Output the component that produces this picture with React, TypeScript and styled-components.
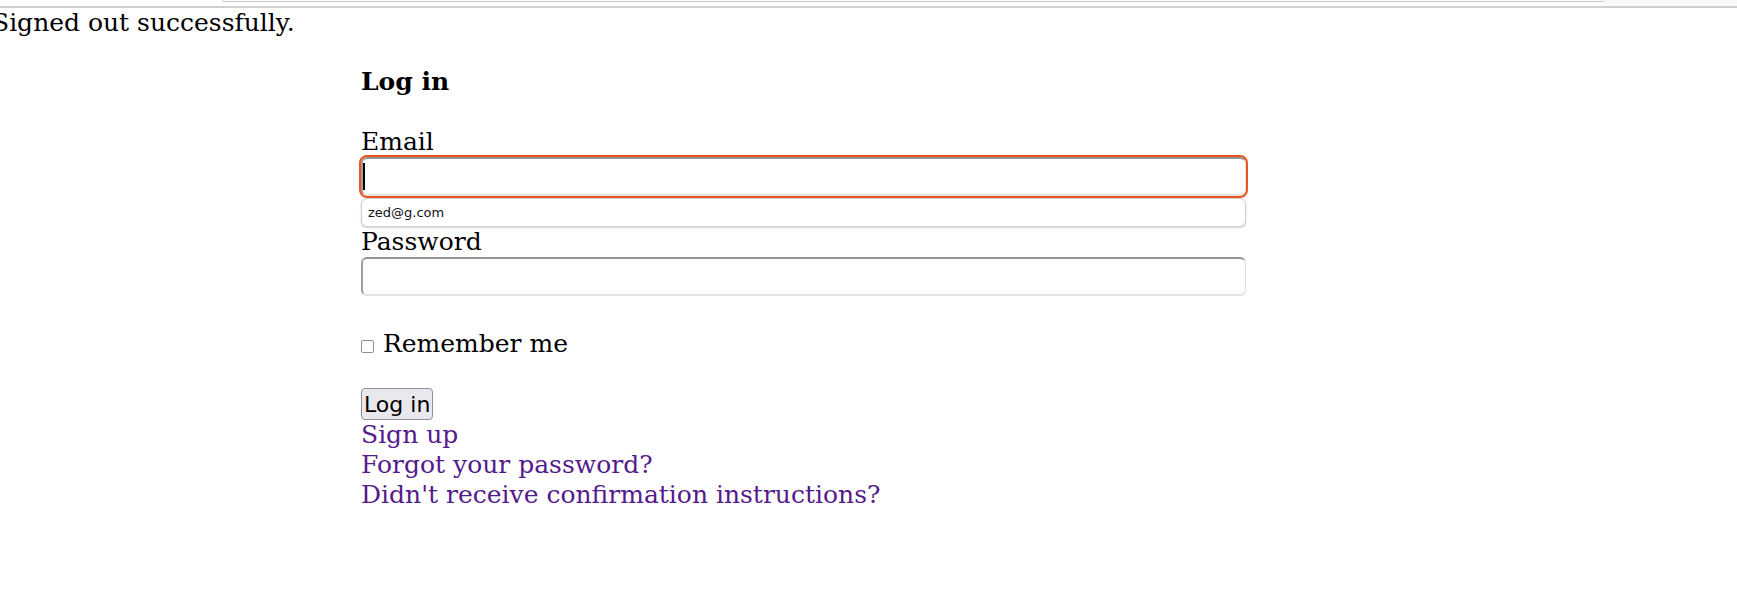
import React from "react";
import styled, { createGlobalStyle } from "styled-components";

const Global = createGlobalStyle`
  html, body { margin: 0; padding: 0; background: #ffffff; }
  body {
    font-family: "DejaVu Serif", serif;
    font-size: 25px;
    line-height: 30px;
    color: #000000;
    overflow: hidden;
  }
`;

const TopBar = styled.div`
  display: flex;
  height: 6px;
  border-bottom: 2px solid #cfcfcf;
`;

const TopGap = styled.div`
  width: 222px;
`;

const UrlField = styled.div`
  width: 1380px;
  height: 1px;
  border: 1px solid #c4c4c4;
  border-top: none;
  border-radius: 0 0 3px 3px;
  background: #ffffff;
`;

const TopFill = styled.div`
  flex: 1;
  background: #f9f9fb;
`;

const Flash = styled.p`
  margin: 0 0 0 -8px;
  white-space: nowrap;
`;

const Form = styled.form`
  margin: 29px 0 0 361px;
  width: 885px;
`;

const Title = styled.h2`
  margin: 0;
  font-size: 25px;
  line-height: 30px;
  font-weight: bold;
`;

const Field = styled.div<{ $gap: number }>`
  margin-top: ${(p) => p.$gap}px;
`;

const Label = styled.label`
  display: block;
`;

const InputWrap = styled.div`
  position: relative;
  height: 39px;
`;

const TextInput = styled.input<{ $focused?: boolean }>`
  box-sizing: border-box;
  display: block;
  width: 885px;
  height: 39px;
  margin: 0;
  padding: 0 4px;
  font-family: "DejaVu Sans", sans-serif;
  font-size: 16px;
  background: #ffffff;
  border-style: solid;
  border-width: 2px 1px 2px 2px;
  border-color: #939393 #dedede #e2e2e2 #a0a0a0;
  border-radius: 6px;
  outline: ${(p) => (p.$focused ? "2px solid #e95420" : "none")};
  outline-offset: 0;
`;

const Caret = styled.span`
  position: absolute;
  left: 2px;
  top: 6px;
  width: 2px;
  height: 27px;
  background: #000000;
`;

const Suggestion = styled.div`
  position: absolute;
  left: 0;
  top: 41px;
  box-sizing: border-box;
  width: 885px;
  height: 29px;
  padding: 0 6px;
  display: flex;
  align-items: center;
  background: #ffffff;
  border: 1px solid #cfcfcf;
  border-radius: 6px;
  box-shadow: 0 1px 2px rgba(0, 0, 0, 0.18);
  font-family: "DejaVu Sans", sans-serif;
  font-size: 13px;
  line-height: 16px;
  color: #111111;
  z-index: 2;
`;

const RememberRow = styled.div`
  margin-top: 33px;
  display: flex;
  align-items: baseline;
`;

const Check = styled.input`
  appearance: none;
  box-sizing: border-box;
  width: 13px;
  height: 13px;
  margin: 0 9px 0 0;
  border: 1px solid #8f8f9d;
  border-radius: 2px;
  background: #ffffff;
  transform: translateY(1px);
`;

const Actions = styled.div`
  margin-top: 29px;
  height: 31px;
`;

const Button = styled.button`
  box-sizing: border-box;
  height: 32px;
  padding: 1px 2px;
  margin: 0;
  font-family: "DejaVu Sans", sans-serif;
  font-size: 22px;
  line-height: 27px;
  color: #000000;
  background: #e9e9ed;
  border: 1px solid #8f8f9d;
  border-radius: 4px;
`;

const Links = styled.div`
  margin-top: 1px;
  display: flex;
  flex-direction: column;
  align-items: flex-start;
`;

const LinkItem = styled.a`
  color: #551a8b;
  text-decoration: none;
  line-height: 30px;
`;

export default function App() {
  return (
    <>
      <Global />
      <TopBar>
        <TopGap />
        <UrlField />
        <TopFill />
      </TopBar>
      <Flash>Signed out successfully.</Flash>
      <Form onSubmit={(e) => e.preventDefault()}>
        <Title>Log in</Title>
        <Field $gap={30}>
          <Label htmlFor="email">Email</Label>
          <InputWrap>
            <TextInput id="email" type="email" $focused />
            <Caret />
            <Suggestion>zed@g.com</Suggestion>
          </InputWrap>
        </Field>
        <Field $gap={31}>
          <Label htmlFor="password">Password</Label>
          <InputWrap>
            <TextInput id="password" type="password" />
          </InputWrap>
        </Field>
        <RememberRow>
          <Check type="checkbox" id="remember" />
          <label htmlFor="remember">Remember me</label>
        </RememberRow>
        <Actions>
          <Button type="submit">Log in</Button>
        </Actions>
        <Links>
          <LinkItem href="#signup">Sign up</LinkItem>
          <LinkItem href="#password">Forgot your password?</LinkItem>
          <LinkItem href="#confirmation">Didn't receive confirmation instructions?</LinkItem>
        </Links>
      </Form>
    </>
  );
}
